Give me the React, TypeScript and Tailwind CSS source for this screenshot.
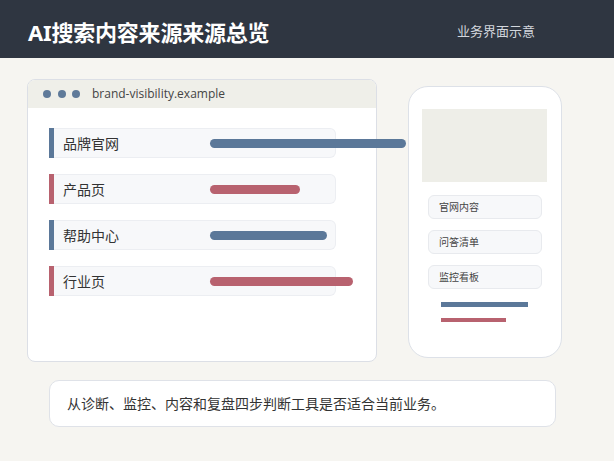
import React from "react";

const rows = [
  { label: "品牌官网", color: "bg-[#5b7899]", w: 196 },
  { label: "产品页", color: "bg-[#b8626f]", w: 90 },
  { label: "帮助中心", color: "bg-[#5b7899]", w: 117 },
  { label: "行业页", color: "bg-[#b8626f]", w: 143 },
];

export default function App() {
  return (
    <div
      className="w-[614px] h-[461px] bg-[#f6f5f1] overflow-hidden"
      style={{ fontFamily: '"Noto Sans", "Noto Sans CJK SC", sans-serif' }}
    >
      <div className="h-[58px] bg-[#2f3641] flex items-center justify-between pl-[28px] pr-[79px]">
        <div className="text-white text-[22px] font-bold pt-[6px] leading-none tracking-[-0.2px]">
          AI搜索内容来源来源总览
        </div>
        <div className="text-[#d3d7dd] text-[13px] pt-[4px] leading-none">业务界面示意</div>
      </div>

      <div className="flex items-start">
        <div className="ml-[27px] mt-[21px] w-[350px] h-[283px] bg-white border border-[#dcdfe6] rounded-[8px] flex flex-col">
          <div className="h-[28px] bg-[#efefe9] rounded-t-[7px] flex items-center pl-[15px]">
            <div className="flex gap-[6.5px]">
              <span className="w-[8px] h-[8px] rounded-full bg-[#5f7a99]" />
              <span className="w-[8px] h-[8px] rounded-full bg-[#5f7a99]" />
              <span className="w-[8px] h-[8px] rounded-full bg-[#5f7a99]" />
            </div>
            <span
              className="ml-[12px] text-[12px] text-[#444]"
              style={{ fontFamily: '"Open Sans", sans-serif' }}
            >
              brand-visibility.example
            </span>
          </div>
          <div className="pl-[21px] pt-[20px] flex flex-col gap-[16px]">
            {rows.map((r) => (
              <div key={r.label} className="flex h-[30px]">
                <div className={`w-[5px] h-full ${r.color}`} />
                <div className="w-[282px] h-full bg-[#f7f8fa] border border-l-0 border-[#eceef2] rounded-r-[6px] flex items-center pl-[9px]">
                  <span className="w-[147px] shrink-0 text-[14px] text-[#333]">{r.label}</span>
                  <span
                    className={`shrink-0 h-[9px] rounded-full ${r.color}`}
                    style={{ width: r.w }}
                  />
                </div>
              </div>
            ))}
          </div>
        </div>

        <div className="ml-[31px] mt-[28px] w-[154px] h-[272px] bg-white border-[1.5px] border-[#dde1e8] rounded-[20px] flex flex-col">
          <div className="ml-[13px] mt-[22px] w-[125px] h-[73px] bg-[#eeeee8]" />
          <div className="ml-[19px] mt-[13px] flex flex-col gap-[11px]">
            {["官网内容", "问答清单", "监控看板"].map((t) => (
              <div
                key={t}
                className="w-[114px] h-[24px] bg-[#f7f8fa] border border-[#e8eaee] rounded-[6px] flex items-center pl-[10px] text-[10px] text-[#444]"
              >
                {t}
              </div>
            ))}
          </div>
          <div className="ml-[32px] mt-[13px] w-[87px] h-[5px] bg-[#5b7899]" />
          <div className="ml-[32px] mt-[11px] w-[65px] h-[4px] bg-[#b8626f]" />
        </div>
      </div>

      <div className="ml-[49px] mt-[18px] w-[507px] h-[47px] bg-white border border-[#dfe2e8] rounded-[10px] flex items-center pl-[17px] text-[14px] text-[#333]">
        从诊断、监控、内容和复盘四步判断工具是否适合当前业务。
      </div>
    </div>
  );
}
